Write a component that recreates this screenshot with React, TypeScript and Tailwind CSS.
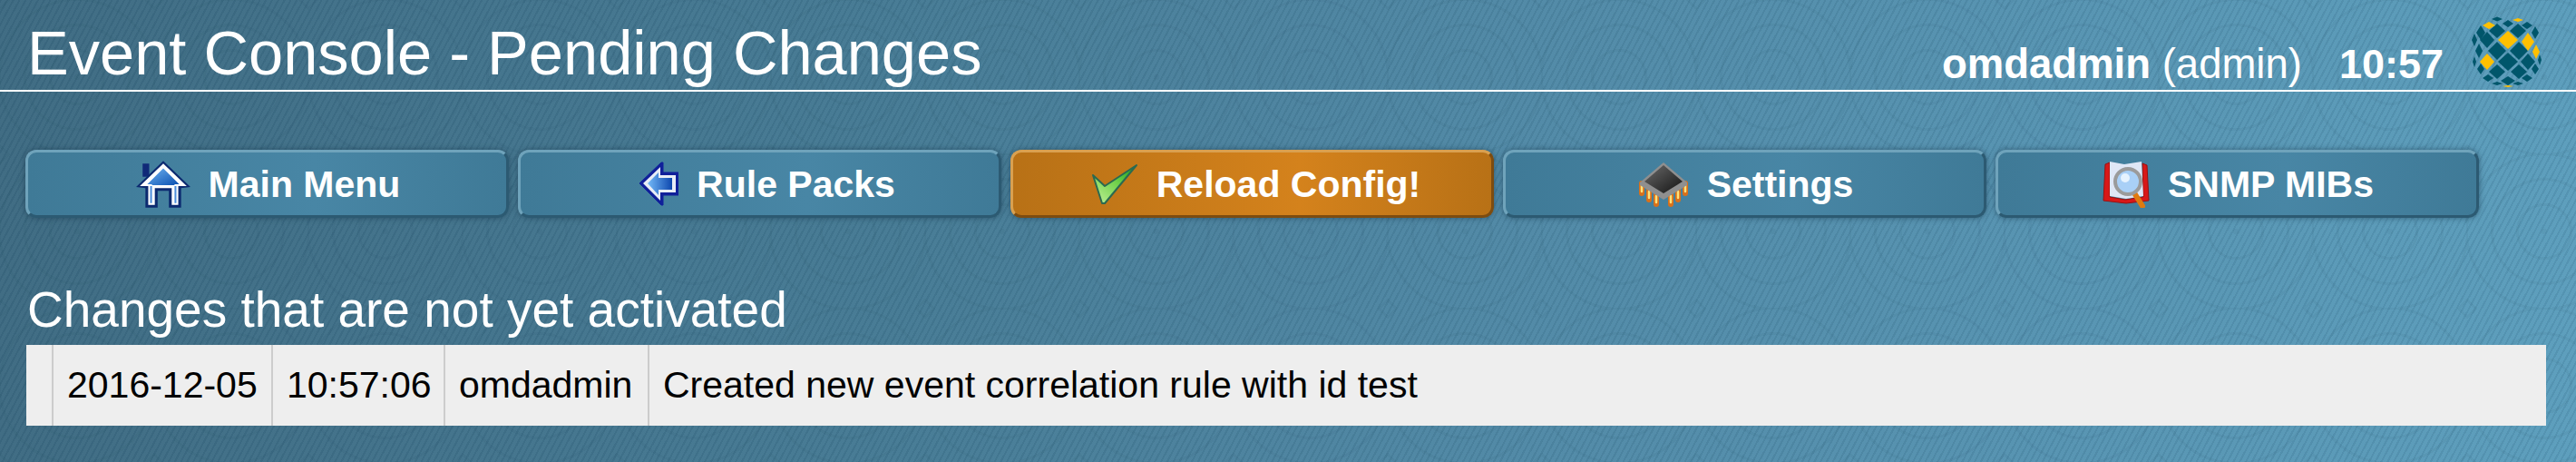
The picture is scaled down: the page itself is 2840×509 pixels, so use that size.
import React from 'react';

const HomeIcon = () => (
  <svg width="60" height="54" viewBox="0 0 58 52" className="shrink-0">
    <defs>
      <linearGradient id="homeFill" x1="0" y1="0" x2="1" y2="1">
        <stop offset="0" stopColor="#6fb4f2" />
        <stop offset="1" stopColor="#0a4fb0" />
      </linearGradient>
    </defs>
    <rect x="7" y="4" width="7" height="14" fill="#102a78" />
    <path d="M29 1 L58 29 L48 30 L48 51 L35 51 L35 33 L23 33 L23 51 L10 51 L10 30 L0 29 Z" fill="#0c2a70" />
    <path d="M29 4 L54 28 L45 28 L45 48 L38 48 L38 30 L20 30 L20 48 L13 48 L13 28 L4 28 Z" fill="#fff" />
    <path d="M29 9 L46 26 L41 26 L41 27 L17 27 L17 26 L12 26 Z" fill="url(#homeFill)" />
    <path d="M16 28 L16 46 M42 28 L42 46" stroke="#4e8fdc" strokeWidth="2" />
  </svg>
);

const BackIcon = () => (
  <svg width="58" height="50" viewBox="-14 0 58 50" className="shrink-0">
    <defs>
      <linearGradient id="backFill" x1="0" y1="0" x2="1" y2="0">
        <stop offset="0" stopColor="#73baf8" />
        <stop offset="1" stopColor="#0d47ae" />
      </linearGradient>
    </defs>
    <path d="M1 24 L25 1 L27 1 L27 12 L44 12 L44 37 L27 37 L27 48 L25 48 Z" fill="#10209a" stroke="#10209a" strokeLinejoin="round" />
    <path d="M5 24 L24 6 L24 15 L41 15 L41 34 L24 34 L24 43 Z" fill="#e8edf6" />
    <path d="M10 24 L22 12 L22 18 L37 18 L37 31 L22 31 L22 37 Z" fill="url(#backFill)" />
  </svg>
);

const CheckIcon = () => (
  <svg width="58" height="46" viewBox="-7 0 58 46" className="shrink-0">
    <defs>
      <linearGradient id="checkFill" x1="0" y1="1" x2="1" y2="0">
        <stop offset="0" stopColor="#c4f29a" />
        <stop offset="0.55" stopColor="#6fd04a" />
        <stop offset="1" stopColor="#12a01a" />
      </linearGradient>
    </defs>
    <path d="M1 13 L14 25 L49 2 L14 44 L11 44 Z" fill="url(#checkFill)" stroke="#2b6a50" strokeWidth="2" strokeLinejoin="round" />
  </svg>
);

const ChipIcon = () => (
  <svg width="56" height="50" viewBox="0 0 56 50" className="shrink-0">
    <defs>
      <linearGradient id="chipFill" x1="0" y1="0" x2="1" y2="1">
        <stop offset="0" stopColor="#6a6a6a" />
        <stop offset="1" stopColor="#141414" />
      </linearGradient>
    </defs>
    <path d="M4 24 L4 35 M12 30 L12 42 M20 34 L20 47 M36 34 L36 47 M44 30 L44 42 M52 24 L52 35" stroke="#d9701a" strokeWidth="6" strokeLinecap="round" />
    <path d="M4 26 L4 33 M12 33 L12 40 M20 38 L20 45 M36 38 L36 45 M44 33 L44 40 M52 26 L52 33" stroke="#ffe27a" strokeWidth="2.5" strokeLinecap="round" />
    <path d="M28 1 L54 23 L54 26 L28 42 L2 26 L2 23 Z" fill="#8f8f8f" />
    <path d="M28 4 L49 22 L28 35 L7 22 Z" fill="url(#chipFill)" />
  </svg>
);

const BookIcon = () => (
  <svg width="52" height="52" viewBox="0 0 52 52" className="shrink-0">
    <path d="M3 4 L8 2 L8 40 L25 43 L45 40 L44 3 L49 5 L51 44 L26 47 L1 44 Z" fill="#d81818" stroke="#9a1010" strokeWidth="1" />
    <path d="M8 1 L24 4 L43 1 L45 39 L26 42 L8 39 Z" fill="#dfe7f6" />
    <path d="M34 34 L44 50" stroke="#e07a10" strokeWidth="6" strokeLinecap="round" />
    <circle cx="28" cy="23" r="14" fill="#a9d0f7" stroke="#9b9b9b" strokeWidth="4" />
    <circle cx="25" cy="19" r="5" fill="#e6f3ff" />
  </svg>
);

// diamonds of the globe: [x, y, half width, half height]
const darkCells = [
  [28, 5, 6, 2.5], [40, 10, 6, 4], [61, 12, 6, 4],
  [28, 18, 9, 8], [51, 18, 9, 8], [10, 20, 5, 8], [70, 20, 4, 7],
  [17, 28, 8, 9], [3, 28, 3, 7],
  [28, 40, 10, 10], [52, 40, 10, 10], [8, 40, 4, 8],
  [40, 52, 11, 10], [62, 52, 8, 9], [3, 52, 2, 6], [75, 50, 2, 6],
  [28, 63, 9, 8], [52, 63, 9, 8], [10, 60, 4, 6], [70, 60, 4, 6],
  [18, 70, 6, 4], [40, 73, 8, 5], [61, 70, 6, 4],
  [28, 76, 6, 2], [51, 76, 6, 2],
];
const goldCells = [
  [40, 28, 11, 10], [62, 30, 7, 10], [71, 41, 4, 8], [17, 52, 8, 9],
  [19, 12, 7, 4], [51, 6, 6, 2], [40, 79, 6, 1],
];

const diamond = ([x, y, w, h]: number[]) => `${x},${y - h} ${x + w},${y} ${x},${y + h} ${x - w},${y}`;

const Logo = () => (
  <svg width="80" height="80" viewBox="0 0 80 80" className="shrink-0">
    {darkCells.map((c, i) => (
      <polygon key={i} points={diamond(c)} fill="#00566b" />
    ))}
    {goldCells.map((c, i) => (
      <polygon key={i} points={diamond(c)} fill="#ffc000" />
    ))}
  </svg>
);

const NavButton = ({ label, icon, hot }: { label: string; icon: React.ReactNode; hot?: boolean }) => (
  <div
    className={`flex h-[75px] w-[533px] items-center justify-center gap-[20px] rounded-[12px] border-[3px] pl-[2px] text-[41px] leading-none font-bold text-white shadow-[0_0_6px_rgba(20,50,70,0.55)] ${
      hot
        ? 'border-t-[#d9a050] border-l-[#d9a050] border-r-[#7d4c10] border-b-[#7d4c10] bg-[linear-gradient(90deg,#b87116,#d4821c_60%,#b87116)]'
        : 'border-t-[#6fa3bb] border-l-[#6fa3bb] border-r-[#2c5a72] border-b-[#2c5a72] bg-[linear-gradient(90deg,#3f7a97,#4886a5_60%,#3f7a97)]'
    }`}
  >
    {icon}
    <span className="pt-[2px]">{label}</span>
  </div>
);

export default function App() {
  return (
    <div className="h-[509px] w-full overflow-hidden bg-[#4a7f99] bg-[repeating-linear-gradient(118deg,rgba(20,55,75,0.09)_0,rgba(20,55,75,0.09)_2px,rgba(255,255,255,0.02)_2px,rgba(255,255,255,0.02)_6px),repeating-radial-gradient(circle_at_85px_85px,rgba(20,60,80,0.06)_0,rgba(20,60,80,0.06)_3px,transparent_3px,transparent_28px),linear-gradient(90deg,#3d6a82_0%,#457a94_35%,#5089a6_60%,#5b9dbc_100%)] bg-[auto,170px_170px,auto] font-['Liberation_Sans',Arial,sans-serif]">
      <div className="flex h-[101px] items-end border-b-2 border-white pl-[30px] pr-[35px] text-white">
        <h1 className="text-[68.6px] leading-[80px] font-normal">Event Console - Pending Changes</h1>
        <div className="ml-auto flex items-end">
          <span className="text-[45.5px] leading-[56px]">
            <b>omdadmin</b> (admin)
          </span>
          <b className="ml-[41px] text-[45px] leading-[56px]">10:57</b>
          <div className="mb-[3px] ml-[31px]">
            <Logo />
          </div>
        </div>
      </div>

      <div className="mt-[64px] flex gap-[10px] pl-[28px]">
        <NavButton label="Main Menu" icon={<HomeIcon />} />
        <NavButton label="Rule Packs" icon={<BackIcon />} />
        <NavButton label="Reload Config!" icon={<CheckIcon />} hot />
        <NavButton label="Settings" icon={<ChipIcon />} />
        <NavButton label="SNMP MIBs" icon={<BookIcon />} />
      </div>

      <h2 className="mt-[62px] pl-[30px] text-[55px] leading-[78px] font-normal text-white">Changes that are not yet activated</h2>

      <div className="pl-[29px] pr-[33px]">
        <table className="h-[89px] w-full border-collapse bg-[#eeeeee] text-[41px] text-black">
          <tbody>
            <tr>
              <td className="w-[29px] border-r-2 border-[#cccccc]"></td>
              <td className="w-[242px] border-r-2 border-[#cccccc] pl-[15px]">2016-12-05</td>
              <td className="w-[190px] border-r-2 border-[#cccccc] pl-[15px]">10:57:06</td>
              <td className="w-[225px] border-r-2 border-[#cccccc] pl-[15px]">omdadmin</td>
              <td className="pl-[15px]">Created new event correlation rule with id test</td>
            </tr>
          </tbody>
        </table>
      </div>
    </div>
  );
}
